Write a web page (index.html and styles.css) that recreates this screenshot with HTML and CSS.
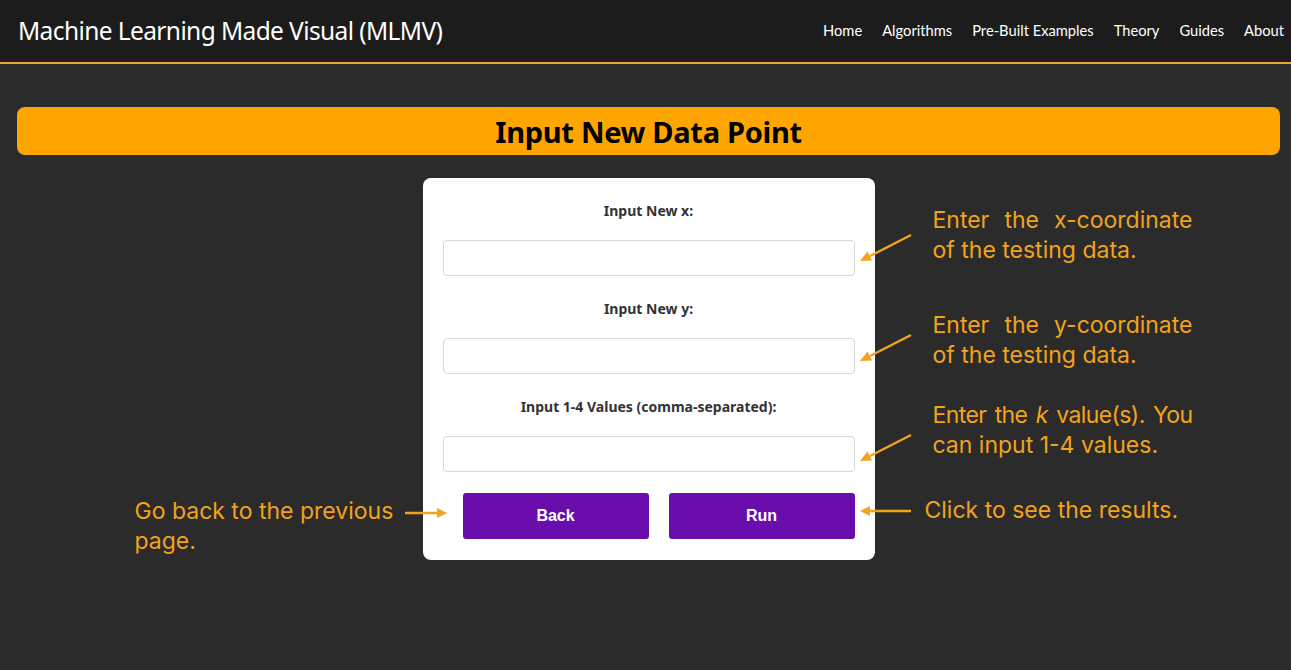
FILE: index.html
```html
<!DOCTYPE html>
<html lang="en">
<head>
<meta charset="utf-8">
<title>MLMV - Input New Data Point</title>
<link rel="stylesheet" href="styles.css">
</head>
<body>
<header class="topbar">
  <div class="brand">Machine Learning Made Visual (MLMV)</div>
  <nav class="nav">
    <a href="#">Home</a>
    <a href="#">Algorithms</a>
    <a href="#">Pre-Built Examples</a>
    <a href="#">Theory</a>
    <a href="#">Guides</a>
    <a href="#">About</a>
  </nav>
</header>
<main class="page">
  <h1 class="banner">Input New Data Point</h1>
  <div class="stage">
    <form class="card">
      <div class="field">
        <label class="label">Input New x:</label>
        <input class="input" type="text">
      </div>
      <div class="field">
        <label class="label">Input New y:</label>
        <input class="input" type="text">
      </div>
      <div class="field">
        <label class="label">Input 1-4 Values (comma-separated):</label>
        <input class="input" type="text">
      </div>
      <div class="buttons">
        <button type="button" class="btn">Back</button>
        <button type="button" class="btn">Run</button>
      </div>
    </form>

    <p class="note note-x"><span class="line just">Enter the x-coordinate</span><span class="line">of the testing data.</span></p>
    <p class="note note-y"><span class="line just">Enter the y-coordinate</span><span class="line">of the testing data.</span></p>
    <p class="note note-k"><span class="line just tight">Enter the <i>k</i> value(s). You</span><span class="line">can input 1-4 values.</span></p>
    <p class="note note-run"><span class="line">Click to see the results.</span></p>
    <p class="note note-back"><span class="line">Go back to the previous</span><span class="line">page.</span></p>

    <svg class="arrow diag diag-x" viewBox="0 0 56 32" width="56" height="32"><line x1="54" y1="3" x2="13" y2="24"/><polygon points="3,29 15.1,28.5 10.5,19.5"/></svg>
    <svg class="arrow diag diag-y" viewBox="0 0 56 32" width="56" height="32"><line x1="54" y1="3" x2="13" y2="24"/><polygon points="3,29 15.1,28.5 10.5,19.5"/></svg>
    <svg class="arrow diag diag-k" viewBox="0 0 56 32" width="56" height="32"><line x1="54" y1="3" x2="13" y2="24"/><polygon points="3,29 15.1,28.5 10.5,19.5"/></svg>
    <svg class="arrow arr-back" viewBox="0 0 46 16" width="46" height="16"><line x1="2" y1="8" x2="36" y2="8"/><polygon points="34,3 44,8 34,13"/></svg>
    <svg class="arrow arr-run" viewBox="0 0 56 16" width="56" height="16"><polygon points="3,8 13,3 13,13"/><line x1="11" y1="8" x2="54" y2="8"/></svg>
  </div>
</main>
</body>
</html>
```
FILE: styles.css
```css
* { box-sizing: border-box; }
html, body { margin: 0; padding: 0; }
body {
  background: #2b2b2b;
  font-family: "Noto Sans", sans-serif;
  height: 670px;
  overflow: hidden;
}
.topbar {
  height: 64px;
  background: #1c1c1c;
  border-bottom: 2px solid #e8a23a;
  display: flex;
  align-items: center;
  justify-content: space-between;
  padding: 0 7px 2px 18px;
}
.brand {
  color: #fff;
  font-family: "Noto Sans", sans-serif;
  font-size: 24.5px;
  letter-spacing: -0.6px;
}
.nav {
  display: flex;
  gap: 20px;
}
.nav a {
  color: #fff;
  text-decoration: none;
  font-family: "Lato", sans-serif;
  font-size: 14.7px;
}
.page {
  padding: 43px 11px 0 17px;
}
.banner {
  margin: 0;
  height: 48px;
  background: #ffa500;
  border-radius: 8px;
  display: flex;
  align-items: center;
  justify-content: center;
  font-family: "Noto Sans", sans-serif;
  font-weight: 700;
  font-size: 29px;
  letter-spacing: -0.3px;
  color: #000;
}
.stage {
  position: relative;
  width: 452px;
  margin: 23px auto 0;
}
.card {
  background: #fff;
  border-radius: 8px;
  padding: 22px 20px 21px;
  display: flex;
  flex-direction: column;
  gap: 22px;
}
.field {
  display: flex;
  flex-direction: column;
  align-items: center;
  gap: 18px;
}
.label {
  font-family: "Noto Sans", sans-serif;
  font-weight: 700;
  font-size: 14px;
  line-height: 22px;
  color: #333;
}
.input {
  width: 100%;
  height: 36px;
  border: 1px solid #d6d6d6;
  border-radius: 4px;
  background: #fff;
}
.buttons {
  display: flex;
  margin-top: -1px;
}
.btn {
  width: 186px;
  height: 46px;
  margin-left: 20px;
  border: none;
  border-radius: 3px;
  background: #6a0dad;
  color: #fff;
  font-family: "Liberation Sans", Arial, sans-serif;
  font-weight: 700;
  font-size: 16px;
}
.note {
  position: absolute;
  margin: 0;
  color: #f2a31b;
  font-family: "Inter", sans-serif;
  font-size: 23px;
  line-height: 30px;
  width: 260px;
}
.line {
  display: block;
  white-space: nowrap;
}
.line.just {
  text-align: justify;
  text-align-last: justify;
}
.line.tight {
  letter-spacing: -0.6px;
  word-spacing: -1px;
}
.note-x { left: 510px; top: 27px; }
.note-y { left: 510px; top: 132px; }
.note-k { left: 510px; top: 222px; }
.note-run { left: 502px; top: 317px; width: 300px; }
.note-back { left: -288px; top: 318px; width: 268px; }
.arrow {
  position: absolute;
  overflow: visible;
}
.arrow line { stroke: #f2a31b; stroke-width: 2.5; }
.arrow polygon { fill: #f2a31b; }
.diag-x { left: 434px; top: 54px; }
.diag-y { left: 434px; top: 154px; }
.diag-k { left: 434px; top: 254px; }
.arr-back { left: -20px; top: 327px; }
.arr-run { left: 434px; top: 325px; }
```
